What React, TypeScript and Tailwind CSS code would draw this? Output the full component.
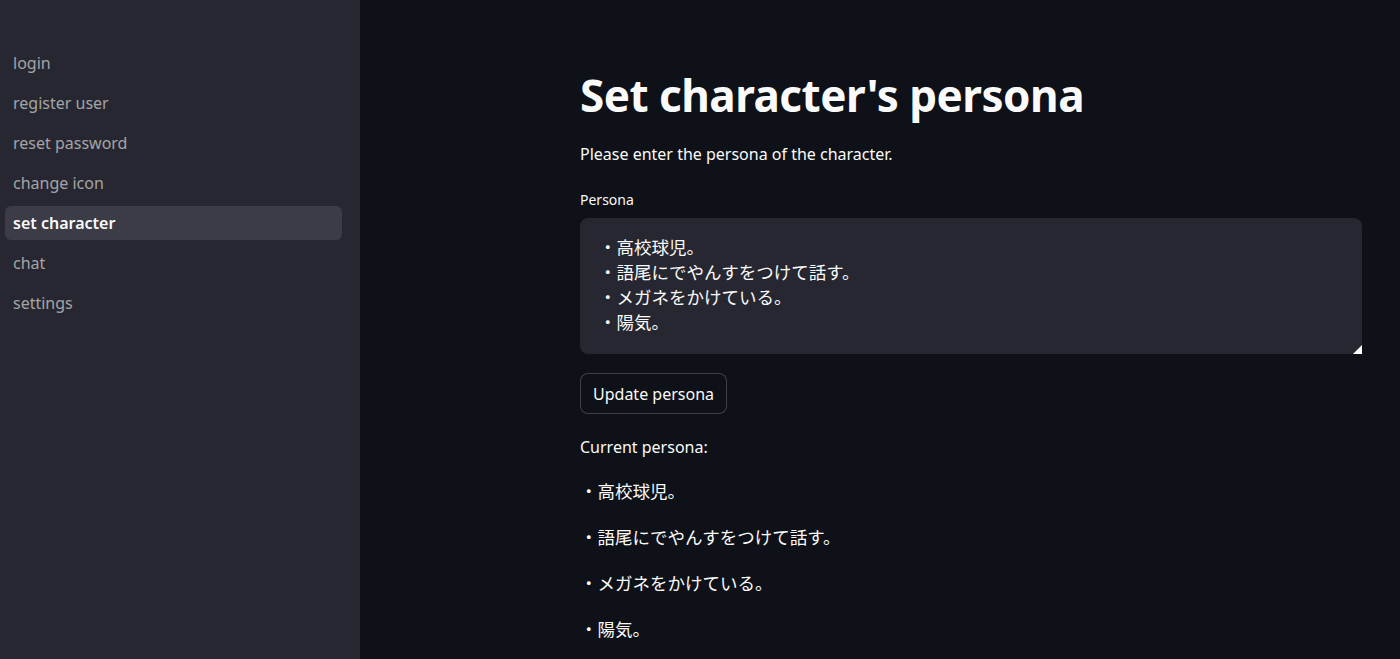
import React from "react";

const navItems = ["login", "register user", "reset password", "change icon", "set character", "chat", "settings"];
const persona = ["・高校球児。", "・語尾にでやんすをつけて話す。", "・メガネをかけている。", "・陽気。"];

const font = { fontFamily: '"Noto Sans", "Noto Sans CJK JP", sans-serif' };

export default function App() {
  return (
    <div className="flex h-[659px] w-full overflow-hidden bg-[#0e1117] text-[#fafafa]" style={font}>
      {/* Sidebar */}
      <aside className="w-[360px] shrink-0 bg-[#262730] pt-[46px] px-[5px]">
        <nav className="flex flex-col w-[337px]">
          {navItems.map((item) => (
            <div
              key={item}
              className={`h-[34px] mb-[6px] flex items-center px-2 rounded-md text-[16px] ${
                item === "set character" ? "bg-[#3b3c46] font-semibold text-[#fafafa]" : "text-[#fafafa]/60"
              }`}
            >
              {item}
            </div>
          ))}
        </nav>
      </aside>

      {/* Main */}
      <main className="flex-1 pl-[220px] pr-[38px] pt-[64px]">
        <h1 className="text-[44px] font-bold leading-[62px] tracking-[-0.5px]">Set character's persona</h1>
        <p className="mt-[16px] text-[16px] leading-[24px]">Please enter the persona of the character.</p>

        <label className="block mt-[24px] text-[14px] leading-[20px]">Persona</label>
        <div className="relative mt-[8px] h-[136px] rounded-lg bg-[#262730] px-4 pt-[17px]">
          {persona.map((line) => (
            <div key={line} className="text-[17.5px] leading-[25px]" style={{ paddingLeft: 3 }}>
              {line}
            </div>
          ))}
          <svg className="absolute right-0 bottom-0" width="9" height="9" viewBox="0 0 9 9">
            <polygon points="9,0 9,9 0,9" fill="#ffffff" />
          </svg>
        </div>

        <button className="mt-[19px] h-[41px] px-[12px] rounded-lg border border-[#fafafa]/20 bg-[#0e1117] text-[16px]">
          Update persona
        </button>

        <p className="mt-[21px] text-[16px] leading-[24px]">Current persona:</p>
        <div className="mt-[20px] flex flex-col gap-[22px]">
          {persona.map((line) => (
            <p key={line} className="text-[17.5px] leading-[24px]">
              {line}
            </p>
          ))}
        </div>
      </main>
    </div>
  );
}
